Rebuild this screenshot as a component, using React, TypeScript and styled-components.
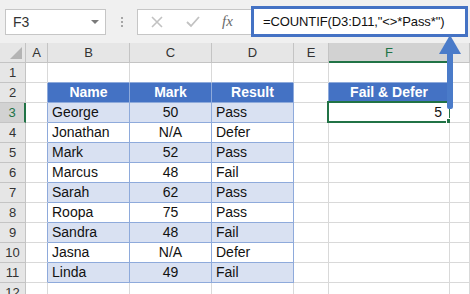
import React from 'react';
import styled, { createGlobalStyle } from 'styled-components';

const GlobalStyle = createGlobalStyle`
  html, body {
    margin: 0;
    padding: 0;
    background: #ffffff;
  }
  body {
    font-family: "Liberation Sans", Arial, sans-serif;
  }
`;

// colours taken off the screenshot
const BLUE = '#4472c4';
const BAND = '#d9e1f2';
const TBORDER = '#8eaadb';
const GRID = '#d9d9d9';
const GREEN = '#217346';
const HEAD_BG = '#e6e6e6';
const HEAD_LINE = '#c4c4c4';

const Page = styled.div`
  position: relative;
  width: 470px;
  height: 294px;
  overflow: hidden;
  background: #fff;
`;

const FormulaBar = styled.div`
  display: flex;
  align-items: center;
  height: 43px;
  padding: 0 2px 0 5px;
  box-sizing: border-box;
  background: #f0f0f0;
`;

const NameBox = styled.div`
  display: flex;
  align-items: center;
  justify-content: space-between;
  width: 101px;
  height: 26px;
  box-sizing: border-box;
  padding: 0 6px 0 7px;
  background: #fff;
  border: 1px solid #c6c6c6;
  font-size: 14px;
  color: #333;
`;

const DropArrow = styled.span`
  width: 0;
  height: 0;
  border-left: 4px solid transparent;
  border-right: 4px solid transparent;
  border-top: 4px solid #7a7a7a;
`;

const Dots = styled.div`
  display: flex;
  flex-direction: column;
  gap: 2px;
  width: 31px;
  align-items: center;
  span {
    width: 2px;
    height: 2px;
    background: #a6a6a6;
  }
`;

const IconBox = styled.div`
  display: flex;
  align-items: center;
  width: 114px;
  height: 26px;
  box-sizing: border-box;
  padding-left: 13px;
  gap: 23px;
  background: #fff;
  border: 1px solid #c6c6c6;
  border-right: none;
`;

const Fx = styled.span`
  font-family: "Liberation Serif", "Times New Roman", serif;
  font-style: italic;
  font-size: 15px;
  color: #6a6a6a;
  margin-left: -1px;
`;

const FormulaInput = styled.div`
  flex: 1;
  height: 31px;
  box-sizing: border-box;
  border: 3px solid ${BLUE};
  background: #fff;
  display: flex;
  align-items: center;
  padding-left: 9px;
  font-size: 13px;
  letter-spacing: -0.1px;
  color: #111;
  white-space: nowrap;
`;

const Sheet = styled.div`
  display: grid;
  grid-template-columns: 26px 22px 82px 82px 82px 35px 121px 1fr;
  grid-auto-rows: 20px;
`;

const Head = styled.div<{ $active?: boolean; $row?: boolean }>`
  box-sizing: border-box;
  background: ${(p) => (p.$active ? '#d2d2d2' : HEAD_BG)};
  border-right: ${(p) => (p.$active && p.$row ? `2px solid ${GREEN}` : `1px solid ${HEAD_LINE}`)};
  border-bottom: ${(p) => (p.$active && !p.$row ? `2px solid ${GREEN}` : `1px solid ${HEAD_LINE}`)};
  display: flex;
  align-items: center;
  justify-content: center;
  font-size: 13px;
  color: ${(p) => (p.$active ? GREEN : '#333')};
`;

const Corner = styled(Head)`
  position: relative;
  &::after {
    content: '';
    position: absolute;
    right: 3px;
    bottom: 3px;
    width: 0;
    height: 0;
    border-left: 12px solid transparent;
    border-bottom: 12px solid #b4b4b4;
  }
`;

const Cell = styled.div<{
  $bg?: string;
  $align?: 'left' | 'center' | 'right';
  $bold?: boolean;
  $light?: boolean;
  $rb?: string;
  $bb?: string;
}>`
  position: relative;
  box-sizing: border-box;
  background: ${(p) => p.$bg || '#fff'};
  border-right: 1px solid ${(p) => p.$rb || GRID};
  border-bottom: 1px solid ${(p) => p.$bb || GRID};
  padding: 0 4px;
  line-height: 19px;
  font-size: 14px;
  font-weight: ${(p) => (p.$bold ? 700 : 400)};
  text-align: ${(p) => p.$align || 'left'};
  color: ${(p) => (p.$light ? '#fff' : '#111')};
  white-space: nowrap;
`;

const Selection = styled.div`
  position: absolute;
  left: -2px;
  top: -2px;
  right: -2px;
  bottom: -1px;
  border: 2px solid ${GREEN};
  pointer-events: none;
  &::after {
    content: '';
    position: absolute;
    right: -4px;
    bottom: -4px;
    width: 5px;
    height: 5px;
    background: ${GREEN};
    border: 1px solid #fff;
  }
`;

const Arrow = styled.svg`
  position: absolute;
  left: 439px;
  top: 35px;
`;

const rows: [string, string, string][] = [
  ['George', '50', 'Pass'],
  ['Jonathan', 'N/A', 'Defer'],
  ['Mark', '52', 'Pass'],
  ['Marcus', '48', 'Fail'],
  ['Sarah', '62', 'Pass'],
  ['Roopa', '75', 'Pass'],
  ['Sandra', '48', 'Fail'],
  ['Jasna', 'N/A', 'Defer'],
  ['Linda', '49', 'Fail'],
];

const cols = ['A', 'B', 'C', 'D', 'E', 'F', ''];

export default function App() {
  const sheetRows: React.ReactNode[] = [];

  // row 1: empty, but its bottom edge is the top of both tables
  sheetRows.push(
    <React.Fragment key="r1">
      <Head $row>1</Head>
      <Cell />
      <Cell $bb={TBORDER} />
      <Cell $bb={TBORDER} />
      <Cell $bb={TBORDER} />
      <Cell />
      <Cell $bb={TBORDER} />
      <Cell />
    </React.Fragment>
  );

  // row 2: headers
  sheetRows.push(
    <React.Fragment key="r2">
      <Head $row>2</Head>
      <Cell $rb={TBORDER} />
      <Cell $bg={BLUE} $align="center" $bold $light $rb={TBORDER} $bb={TBORDER}>Name</Cell>
      <Cell $bg={BLUE} $align="center" $bold $light $rb={TBORDER} $bb={TBORDER}>Mark</Cell>
      <Cell $bg={BLUE} $align="center" $bold $light $rb={TBORDER} $bb={TBORDER}>Result</Cell>
      <Cell $rb={TBORDER} />
      <Cell $bg={BLUE} $align="center" $bold $light $rb={TBORDER} $bb={TBORDER}>Fail &amp; Defer</Cell>
      <Cell />
    </React.Fragment>
  );

  rows.forEach(([name, mark, result], i) => {
    const n = i + 3;
    const bg = i % 2 === 0 ? BAND : '#fff';
    sheetRows.push(
      <React.Fragment key={`r${n}`}>
        <Head $row $active={n === 3}>{n}</Head>
        <Cell $rb={TBORDER} />
        <Cell $bg={bg} $rb={TBORDER} $bb={TBORDER}>{name}</Cell>
        <Cell $bg={bg} $align="center" $rb={TBORDER} $bb={TBORDER}>{mark}</Cell>
        <Cell $bg={bg} $rb={TBORDER} $bb={TBORDER}>{result}</Cell>
        <Cell />
        {n === 3 ? (
          <Cell $align="right" style={{ paddingRight: 7 }}>
            5
            <Selection />
          </Cell>
        ) : (
          <Cell />
        )}
        <Cell />
      </React.Fragment>
    );
  });

  sheetRows.push(
    <React.Fragment key="r12">
      <Head $row>12</Head>
      <Cell />
      <Cell />
      <Cell />
      <Cell />
      <Cell />
      <Cell />
      <Cell />
    </React.Fragment>
  );

  return (
    <>
      <GlobalStyle />
      <Page>
        <FormulaBar>
          <NameBox>
            F3
            <DropArrow />
          </NameBox>
          <Dots>
            <span />
            <span />
            <span />
          </Dots>
          <IconBox>
            <svg width="12" height="12" viewBox="0 0 12 12">
              <path d="M1 1 L11 11 M11 1 L1 11" stroke="#c2c2c2" strokeWidth="1.6" fill="none" />
            </svg>
            <svg width="14" height="12" viewBox="0 0 14 12">
              <path d="M1 6 L5 10 L13 1" stroke="#c2c2c2" strokeWidth="1.8" fill="none" />
            </svg>
            <Fx>fx</Fx>
          </IconBox>
          <FormulaInput>=COUNTIF(D3:D11,"&lt;&gt;*Pass*")</FormulaInput>
        </FormulaBar>
        <Sheet>
          <Corner />
          {cols.map((c) => (
            <Head key={c || 'g'} $active={c === 'F'}>
              {c}
            </Head>
          ))}
          {sheetRows}
        </Sheet>
        <Arrow width="22" height="76" viewBox="0 0 22 76">
          <polygon points="0,19 11,0 22,19" fill="#4a7bc9" />
          <rect x="8" y="17" width="6" height="57" rx="2" fill="#4a7bc9" />
        </Arrow>
      </Page>
    </>
  );
}
